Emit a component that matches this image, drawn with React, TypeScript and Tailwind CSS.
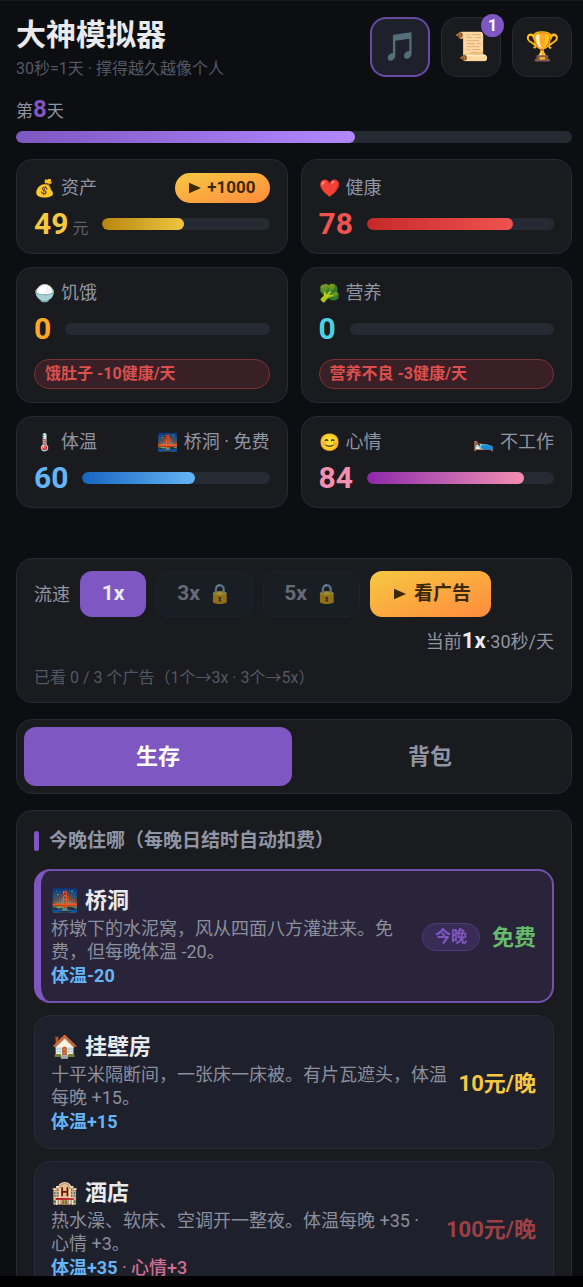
import React, { useState } from 'react';
import clsx from 'clsx';

interface Stat {
  id: string;
  icon: string;
  label: string;
  value: number;
  unit?: string;
  percent: number;
  valueClass: string;
  barClass: string;
  tall?: boolean;
  reward?: string;
  extraIcon?: string;
  extra?: string;
  warning?: string;
}

interface Effect {
  text: string;
  className: string;
}

interface Lodging {
  id: string;
  icon: string;
  name: string;
  description: string;
  price: string;
  priceClass: string;
  effects: Effect[];
}

const STATS: Stat[] = [
  {
    id: 'money',
    icon: '💰',
    label: '资产',
    value: 49,
    unit: '元',
    percent: 49,
    valueClass: 'text-[#f5c842]',
    barClass: 'from-[#b8860b] to-[#f0c541]',
    tall: true,
    reward: '+1000',
  },
  {
    id: 'health',
    icon: '❤️',
    label: '健康',
    value: 78,
    percent: 78,
    valueClass: 'text-[#ef5350]',
    barClass: 'from-[#c62828] to-[#ef5350]',
    tall: true,
  },
  {
    id: 'hunger',
    icon: '🍚',
    label: '饥饿',
    value: 0,
    percent: 0,
    valueClass: 'text-[#ffa726]',
    barClass: 'from-[#ef6c00] to-[#ffa726]',
    warning: '饿肚子 -10健康/天',
  },
  {
    id: 'nutrition',
    icon: '🥦',
    label: '营养',
    value: 0,
    percent: 0,
    valueClass: 'text-[#4dd0e1]',
    barClass: 'from-[#00838f] to-[#4dd0e1]',
    warning: '营养不良 -3健康/天',
  },
  {
    id: 'temperature',
    icon: '🌡️',
    label: '体温',
    value: 60,
    percent: 60,
    valueClass: 'text-[#64b5f6]',
    barClass: 'from-[#1565c0] to-[#64b5f6]',
    extraIcon: '🌉',
    extra: '桥洞 · 免费',
  },
  {
    id: 'mood',
    icon: '😊',
    label: '心情',
    value: 84,
    percent: 84,
    valueClass: 'text-[#f48fb1]',
    barClass: 'from-[#8e24aa] to-[#f48fb1]',
    extraIcon: '🛌',
    extra: '不工作',
  },
];

const LODGINGS: Lodging[] = [
  {
    id: 'bridge',
    icon: '🌉',
    name: '桥洞',
    description: '桥墩下的水泥窝，风从四面八方灌进来。免费，但每晚体温 -20。',
    price: '免费',
    priceClass: 'text-[#66bb6a]',
    effects: [{ text: '体温-20', className: 'font-bold text-[#64b5f6]' }],
  },
  {
    id: 'room',
    icon: '🏠',
    name: '挂壁房',
    description: '十平米隔断间，一张床一床被。有片瓦遮头，体温每晚 +15。',
    price: '10元/晚',
    priceClass: 'text-[#f5c842]',
    effects: [{ text: '体温+15', className: 'font-bold text-[#64b5f6]' }],
  },
  {
    id: 'hotel',
    icon: '🏨',
    name: '酒店',
    description: '热水澡、软床、空调开一整夜。体温每晚 +35 · 心情 +3。',
    price: '100元/晚',
    priceClass: 'text-[#9c4046]',
    effects: [
      { text: '体温+35', className: 'font-bold text-[#64b5f6]' },
      { text: '心情+3', className: 'font-medium text-[#cf6f93]' },
    ],
  },
];

function PlayIcon({ className }: { className?: string }) {
  return (
    <svg viewBox="0 0 12 12" className={className} fill="currentColor" aria-hidden="true">
      <path d="M0 0.8 L12 6 L0 11.2 Z" />
    </svg>
  );
}

function HeaderButton({ icon, label, active, badge }: { icon: string; label: string; active?: boolean; badge?: number }) {
  return (
    <button
      type="button"
      aria-label={label}
      className={clsx(
        'relative flex size-[60px] items-center justify-center rounded-2xl text-[28px] leading-none',
        active ? 'border-2 border-[#6a4aa2] bg-[#1e202c]' : 'border border-[#262a33] bg-[#1a1b1f]'
      )}
    >
      {icon}
      {badge && (
        <span className="absolute -top-1 -right-1 flex size-[23px] items-center justify-center rounded-full bg-[#7e57c2] text-base font-bold text-white">
          {badge}
        </span>
      )}
    </button>
  );
}

function StatCard({ stat }: { stat: Stat }) {
  return (
    <div className="rounded-2xl border border-[#262a33] bg-[#1a1b1f] px-[17px] py-[13px]">
      <div className={clsx('flex items-center justify-between', stat.tall ? 'mb-[5px] h-[30px]' : 'mb-2 h-6')}>
        <div className="flex items-center gap-[7px] text-[18px] leading-6 text-[#9095a3]">
          <span className="w-5 text-center text-[17px]">{stat.icon}</span>
          <span>{stat.label}</span>
        </div>
        {stat.reward && (
          <button
            type="button"
            className="flex h-[30px] items-center gap-1.5 rounded-full bg-linear-to-br from-[#f5c842] to-[#ff8a3d] px-3.5 text-[17px] font-bold text-[#3b2806]"
          >
            <PlayIcon className="size-3" />
            {stat.reward}
          </button>
        )}
        {stat.extra && (
          <div className="flex items-center gap-[7px] text-[18px] leading-6 text-[#9095a3]">
            <span className="w-5 text-center text-[17px]">{stat.extraIcon}</span>
            <span>{stat.extra}</span>
          </div>
        )}
      </div>

      <div className="flex h-8 items-center gap-3.5">
        <div className="flex items-baseline gap-1">
          <span className={clsx('text-[30px] leading-8 font-bold', stat.valueClass)}>{stat.value}</span>
          {stat.unit && <span className="text-base leading-none text-[#5c6170]">{stat.unit}</span>}
        </div>
        <div className="h-3 flex-1 overflow-hidden rounded-full bg-[#262a33]">
          <div className={clsx('h-full rounded-full bg-linear-to-r', stat.barClass)} style={{ width: `${stat.percent}%` }} />
        </div>
      </div>

      {stat.warning && (
        <div className="mt-3.5 flex h-[30px] items-center rounded-full border border-[#7d3236] bg-[#382026] px-2.5 text-base font-bold text-[#dc4f4e]">
          {stat.warning}
        </div>
      )}
    </div>
  );
}

function LodgingCard({ lodging, selected, onSelect }: { lodging: Lodging; selected: boolean; onSelect: () => void }) {
  return (
    <button
      type="button"
      onClick={onSelect}
      className={clsx(
        'flex min-h-[134px] w-full items-center gap-2 rounded-2xl pt-3.5 pb-3 text-left',
        selected
          ? 'border-2 border-l-[7px] border-[#7450b0] border-l-[#7e57c2] bg-[#292439] pr-4 pl-2.5'
          : 'border border-[#282c37] bg-[#1e202c] pr-[17px] pl-4'
      )}
    >
      <span className="min-w-0 flex-1">
        <span className="flex items-center gap-2 text-[22px] leading-8 font-bold text-[#e8eaed]">
          <span className="w-[26px] text-center text-[22px]">{lodging.icon}</span>
          {lodging.name}
        </span>
        <span className="block text-[18px] leading-[23px] text-[#8b8f9d]">{lodging.description}</span>
        <span className="block text-[18px] leading-[26px]">
          {lodging.effects.map((effect, i) => (
            <React.Fragment key={effect.text}>
              {i > 0 && <span className="text-[#cf6f93]"> · </span>}
              <span className={effect.className}>{effect.text}</span>
            </React.Fragment>
          ))}
        </span>
      </span>
      <span className="flex shrink-0 items-center gap-3">
        {selected && (
          <span className="rounded-full border border-[#4e3b78] bg-[#382b55] px-3 text-base leading-[26px] font-bold text-[#7e57c2]">
            今晚
          </span>
        )}
        <span className={clsx('text-[22px] font-bold', lodging.priceClass)}>{lodging.price}</span>
      </span>
    </button>
  );
}

export default function App() {
  const [tab, setTab] = useState('survive');
  const [lodging, setLodging] = useState('bridge');

  return (
    <div className="flex h-screen flex-col bg-black font-[Roboto,'Noto_Sans_CJK_SC',sans-serif]">
      <main className="min-h-0 flex-1 overflow-hidden border-t border-[#1a1b1f] bg-[#0d0e12] pt-4 pr-[11px] pl-4">
        <header className="flex items-start justify-between">
          <div>
            <h1 className="text-[30px] leading-9 font-bold text-[#e8eaed]">大神模拟器</h1>
            <p className="mt-1 text-base leading-6 text-[#535865]">30秒=1天 · 撑得越久越像个人</p>
          </div>
          <div className="flex gap-[11px]">
            <HeaderButton icon="🎵" label="音乐" active />
            <HeaderButton icon="📜" label="任务" badge={1} />
            <HeaderButton icon="🏆" label="成就" />
          </div>
        </header>

        {/* Day progress */}
        <div className="mt-3 flex items-baseline text-[17px] leading-8 text-[#9095a3]">
          第<span className="text-2xl leading-8 font-bold text-[#7e57c2]">8</span>天
        </div>
        <div className="mt-1 h-3 overflow-hidden rounded-full bg-[#262a33]">
          <div className="h-full w-[61%] rounded-full bg-linear-to-r from-[#7e57c2] to-[#b388ff]" />
        </div>

        <section className="mt-4 grid grid-cols-2 gap-[13px]">
          {STATS.map((stat) => (
            <StatCard key={stat.id} stat={stat} />
          ))}
        </section>

        {/* Speed controls */}
        <section className="mt-[50px] rounded-2xl border border-[#262a33] bg-[#1a1b1f] px-[17px] py-3">
          <div className="flex items-center gap-2.5">
            <span className="text-[18px] text-[#9095a3]">流速</span>
            <button type="button" className="h-[46px] w-[66px] rounded-xl bg-[#7e57c2] text-[21px] font-bold text-[#e8eaed]">
              1x
            </button>
            {['3x', '5x'].map((speed) => (
              <button
                key={speed}
                type="button"
                disabled
                className="flex h-[46px] w-[97px] items-center justify-center gap-2 rounded-xl border border-[#1d232b] bg-[#191e25] text-[21px] font-bold text-[#676b75]"
              >
                {speed}
                <span className="text-[19px] opacity-60">🔒</span>
              </button>
            ))}
            <button
              type="button"
              className="flex h-[46px] w-[121px] items-center justify-center gap-2 rounded-xl bg-linear-to-br from-[#f5c842] to-[#ff8a3d] pl-1 text-[19px] font-bold text-[#3b2806]"
            >
              <PlayIcon className="size-3" />
              看广告
            </button>
          </div>
          <div className="mt-2 flex items-baseline justify-end text-[18px] leading-8 text-[#9095a3]">
            当前<strong className="text-[22px] text-[#e8eaed]">1x</strong>·30秒/天
          </div>
          <p className="mt-2 text-base leading-6 text-[#535865]">已看 0 / 3 个广告（1个→3x · 3个→5x）</p>
        </section>

        <nav className="mt-4 grid grid-cols-2 gap-1 rounded-2xl border border-[#262a33] bg-[#1a1b1f] p-[7px]">
          {[
            { id: 'survive', label: '生存' },
            { id: 'bag', label: '背包' },
          ].map((item) => (
            <button
              key={item.id}
              type="button"
              onClick={() => setTab(item.id)}
              className={clsx(
                'h-[59px] rounded-xl text-[22px] font-bold',
                tab === item.id ? 'bg-[#7e57c2] text-white' : 'text-[#9095a3]'
              )}
            >
              {item.label}
            </button>
          ))}
        </nav>

        <section className="mt-4 rounded-2xl border border-[#262a33] bg-[#1a1b1f] px-[17px] py-4">
          <h2 className="flex items-center gap-2.5 text-[19px] leading-7 font-bold text-[#9095a3]">
            <span className="h-5 w-[5px] rounded-sm bg-[#7e57c2]" />
            今晚住哪（每晚日结时自动扣费）
          </h2>
          <div className="mt-3.5 flex flex-col gap-3">
            {LODGINGS.map((item) => (
              <LodgingCard
                key={item.id}
                lodging={item}
                selected={lodging === item.id}
                onSelect={() => setLodging(item.id)}
              />
            ))}
          </div>
        </section>
      </main>
      <div className="h-[11px] shrink-0 bg-black" />
    </div>
  );
}
